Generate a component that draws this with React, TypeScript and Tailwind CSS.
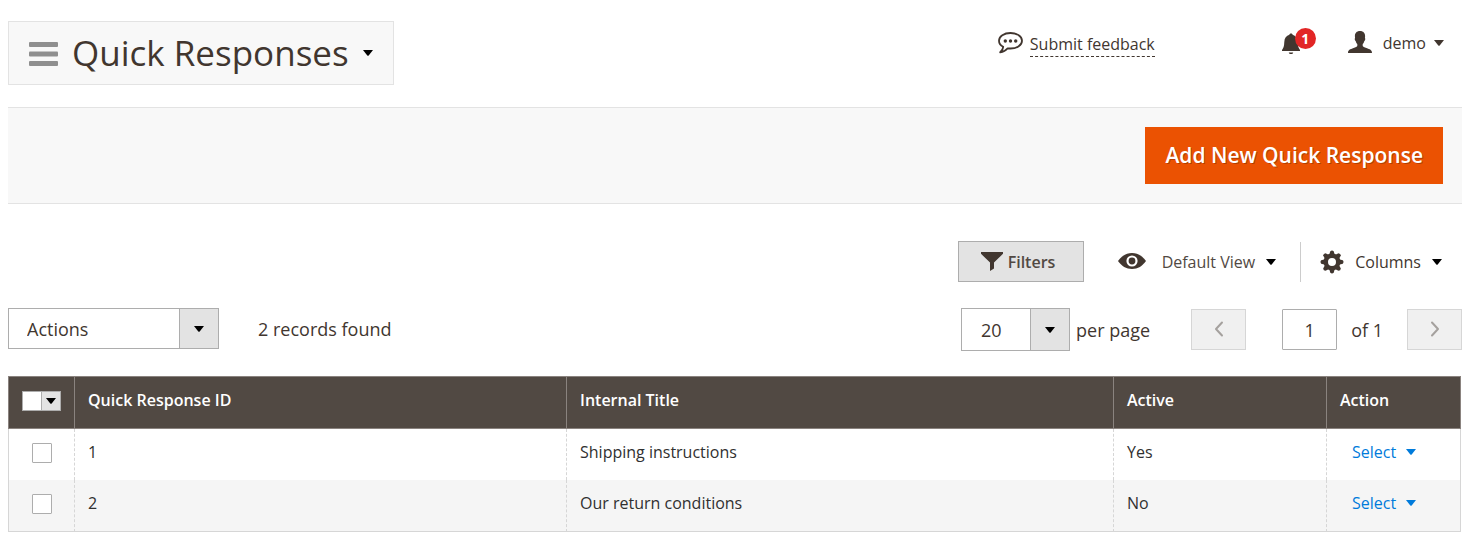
import React from "react";

type Row = { id: number; title: string; active: string };

const rows: Row[] = [
  { id: 1, title: "Shipping instructions", active: "Yes" },
  { id: 2, title: "Our return conditions", active: "No" },
];

function Caret({ className = "" }: { className?: string }) {
  return (
    <svg aria-hidden="true" viewBox="0 0 10 6" className={`h-[6px] w-[10px] shrink-0 ${className}`}>
      <path d="M0 0h10L5.7 5.4Q5 6.2 4.3 5.4Z" fill="currentColor" />
    </svg>
  );
}

function MenuIcon() {
  return (
    <svg aria-hidden="true" viewBox="0 0 29 24" className="mt-[2px] h-6 w-[29px] shrink-0" fill="#8f8f8f">
      <rect width="29" height="5" rx="1" />
      <rect y="9.5" width="29" height="5" rx="1" />
      <rect y="19" width="29" height="5" rx="1" />
    </svg>
  );
}

function SpeechIcon() {
  return (
    <svg aria-hidden="true" viewBox="0 0 26 22" className="h-[22px] w-[26px] shrink-0">
      <path
        d="M13.500 1C7 1 2 4.300 2 8.700c0 2.700 1.700 4.800 4.200 6.100C6 17 5 18.800 3.200 20.300c3.200-.3 5.600-1.700 7.500-4 .9.200 1.800.2 2.800.2 6.500 0 11.500-3.400 11.500-7.800S20 1 13.500 1Z"
        fill="none"
        stroke="#41362f"
        strokeWidth="1.800"
        strokeLinejoin="round"
      />
      <g fill="#41362f">
        <circle cx="8.300" cy="9" r="1.700" />
        <circle cx="13.500" cy="9" r="1.700" />
        <circle cx="18.700" cy="9" r="1.700" />
      </g>
    </svg>
  );
}

function BellIcon() {
  return (
    <svg aria-hidden="true" viewBox="0 -1.500 20 22" className="h-[22px] w-5" fill="#41362f">
      <path d="M10 0c-1 0-1.600.7-1.600 1.300C5.300 2.100 3.400 4.600 3.300 8.400c-.1 4.300-.9 6.200-2.300 8V17.500h18v-1.100c-1.400-1.800-2.200-3.700-2.300-8-.1-3.800-2-6.300-5.100-7.100C11.600.7 11 0 10 0Z" />
      <path d="M7.800 19h4.400c-.2 1-1 1.500-2.200 1.500S8 20 7.800 19Z" />
    </svg>
  );
}

function UserIcon() {
  return (
    <svg aria-hidden="true" viewBox="0 0 24 22" className="mb-[2px] h-[22px] w-6 shrink-0" fill="#41362f">
      <path d="M12 0C8.600 0 6.900 2.100 6.900 5.200c0 .7.100 1.200.200 1.700-.7.300-.4 2.600.6 3 .3 1.500.8 2.400 1.600 3.200v1.900c-.3.800-1.700 1.200-3.700 1.900C2 18.200 0 18.700 0 22h24c0-3.300-2-3.800-5.600-5.100-2-.7-3.400-1.100-3.700-1.900v-1.900c.8-.8 1.300-1.700 1.600-3.200 1-.4 1.300-2.700.6-3 .1-.5.200-1 .200-1.700C17.100 2.100 15.400 0 12 0Z" />
    </svg>
  );
}

function FunnelIcon() {
  return (
    <svg aria-hidden="true" viewBox="0 0 22 19" className="h-[19px] w-[22px] shrink-0" fill="#41362f">
      <path d="M0 0h22v1.800L13 10.500v6L9 19v-8.500L0 1.800Z" />
    </svg>
  );
}

function EyeIcon() {
  return (
    <svg aria-hidden="true" viewBox="0 0 28 16" className="mb-[2px] h-4 w-7 shrink-0">
      <path d="M0 8C3.500 3 8.200 0 14 0s10.500 3 14 8c-3.500 5-8.200 8-14 8S3.500 13 0 8Z" fill="#41362f" />
      <circle cx="14" cy="8" r="4.500" fill="none" stroke="#fff" strokeWidth="2.200" />
    </svg>
  );
}

function GearIcon() {
  return (
    <svg aria-hidden="true" viewBox="-12 -12 24 24" className="size-6 shrink-0">
      <g fill="#41362f">
        {[0, 45, 90, 135, 180, 225, 270, 315].map((angle) => (
          <path key={angle} d="M-2.800-7L-1.700-10.800Q0-12.200 1.700-10.800L2.800-7Z" transform={`rotate(${angle})`} />
        ))}
      </g>
      <circle r="6.200" fill="none" stroke="#41362f" strokeWidth="4.400" />
    </svg>
  );
}

function Chevron({ d }: { d: string }) {
  return (
    <svg aria-hidden="true" viewBox="0 0 10 16" className="mb-[2px] h-4 w-[10px]">
      <path d={d} fill="none" stroke="#a5a19e" strokeWidth="2" strokeLinecap="round" strokeLinejoin="round" />
    </svg>
  );
}

function SelectBox({ label, options, className }: { label: string; options: string[]; className: string }) {
  return (
    <div className="relative flex">
      <select
        aria-label={label}
        className={`appearance-none rounded-none border border-[#adadad] bg-white text-lg text-[#41362f] ${className}`}
      >
        {options.map((option) => (
          <option key={option}>{option}</option>
        ))}
      </select>
      <span className="pointer-events-none absolute inset-y-px right-px flex w-[39px] items-center justify-center border-l border-[#adadad] bg-[#e3e3e3] text-black">
        <Caret />
      </span>
    </div>
  );
}

const checkbox = "mb-1 block size-5 appearance-none rounded-[1px] border border-[#adadad] bg-white checked:bg-[#514943]";
const headCell = "border-y border-l border-[#8a837f] px-[13px] pb-[6px] text-left font-semibold last:border-r";
const bodyCell = "border-l border-dashed border-l-[#d6d6d6] px-[13px] pb-[6px] group-last:border-b group-last:[border-bottom-style:solid] group-last:border-b-[#d6d6d6]";

export default function App() {
  return (
    <div className="pt-[21px] pr-1 pb-1 pl-2 font-['Open_Sans','Noto_Sans',sans-serif] text-base text-[#41362f]">
      <header className="flex items-start justify-between">
        <button type="button" className="flex h-16 items-center gap-[14px] border border-[#e3e3e3] bg-[#f8f8f8] px-5">
          <MenuIcon />
          <h1 className="text-[35px] font-normal">Quick Responses</h1>
          <Caret className="text-black" />
        </button>
        <div className="flex h-11 items-center pr-[18px]">
          <a href="#feedback" className="flex items-center gap-[7px]">
            <SpeechIcon />
            <span className="mt-1 border-b border-dashed border-[#41362f] leading-[23px]">Submit feedback</span>
          </a>
          <button type="button" aria-label="Notifications, 1 unread" className="relative ml-[126px]">
            <BellIcon />
            <span className="absolute -top-1 left-[14px] flex size-[21px] items-center justify-center rounded-full bg-[#e22626] text-sm font-bold text-white">
              1
            </span>
          </button>
          <button type="button" className="ml-[47px] flex items-center">
            <UserIcon />
            <span className="ml-[11px]">demo</span>
            <Caret className="ml-2" />
          </button>
        </div>
      </header>

      <section className="mt-[22px] flex justify-end border-y border-[#e3e3e3] bg-[#f8f8f8] py-[19px] pr-[19px]">
        <button
          type="button"
          className="h-[57px] bg-[#eb5202] px-5 text-[21px] font-semibold text-white [text-shadow:1px_1px_0_rgba(0,0,0,0.25)]"
        >
          Add New Quick Response
        </button>
      </section>

      <div className="mt-[37px] flex items-center justify-end pr-5">
        <button
          type="button"
          className="flex h-[41px] w-[126px] items-center gap-[5px] border border-[#adadad] bg-[#e3e3e3] pl-[22px] font-semibold text-[#514943]"
        >
          <FunnelIcon />
          Filters
        </button>
        <button type="button" className="ml-[34px] flex h-10 items-center">
          <EyeIcon />
          <span className="ml-4 text-[#514943]">Default View</span>
          <Caret className="ml-[11px] text-black" />
        </button>
        <button type="button" className="ml-6 flex h-10 items-center border-l border-[#ccc] pl-[19px]">
          <GearIcon />
          <span className="ml-[11px]">Columns</span>
          <Caret className="ml-[11px] text-black" />
        </button>
      </div>

      <div className="mt-[26px] flex items-start justify-between text-lg">
        <div className="flex items-center gap-[39px]">
          <SelectBox label="Actions" options={["Actions", "Delete"]} className="h-[41px] w-[211px] pl-[18px]" />
          <p>2 records found</p>
        </div>
        <div className="flex items-center">
          <SelectBox label="Records per page" options={["20", "30", "50", "100"]} className="h-[43px] w-[109px] pl-[19px]" />
          <span className="ml-[6px]">per page</span>
          <button
            type="button"
            disabled
            aria-label="Previous page"
            className="ml-[41px] flex h-[41px] w-[55px] items-center justify-center border border-[#d6d6d6] bg-[#f0f0f0]"
          >
            <Chevron d="M8 1.500 2 8l6 6.500" />
          </button>
          <input
            aria-label="Page number"
            defaultValue="1"
            className="ml-9 h-[41px] w-[55px] rounded-[1px] border border-[#adadad] bg-white text-center"
          />
          <span className="ml-[14px]">of 1</span>
          <button
            type="button"
            disabled
            aria-label="Next page"
            className="ml-6 flex h-[41px] w-[55px] items-center justify-center border border-[#d6d6d6] bg-[#f0f0f0]"
          >
            <Chevron d="M2 1.500 8 8l-6 6.500" />
          </button>
        </div>
      </div>

      <div className="mt-[25px] pr-px">
        <table className="w-full table-fixed border-separate border-spacing-0">
          <colgroup>
            <col className="w-[66px]" />
            <col className="w-[492px]" />
            <col />
            <col className="w-[213px]" />
            <col className="w-[135px]" />
          </colgroup>
          <thead>
            <tr className="h-[53px] bg-[#514943] text-white">
              <th className="border-y border-l border-[#8a837f] pb-1">
                <div className="mx-auto flex h-5 w-[39px] border border-[#adadad] bg-[#e3e3e3]">
                  <input type="checkbox" aria-label="Select all" className="h-full w-[18px] appearance-none bg-white checked:bg-[#8a837f]" />
                  <button
                    type="button"
                    aria-label="Selection options"
                    className="flex flex-1 items-center justify-center border-l border-[#adadad] text-black"
                  >
                    <Caret />
                  </button>
                </div>
              </th>
              <th className={headCell}>Quick Response ID</th>
              <th className={headCell}>Internal Title</th>
              <th className={headCell}>Active</th>
              <th className={headCell}>Action</th>
            </tr>
          </thead>
          <tbody className="text-[#303030]">
            {rows.map((row) => (
              <tr key={row.id} className="group h-[51px] last:h-[52px] even:bg-[#f5f5f5]">
                <td className="border-l border-[#d6d6d6] pl-[23px] group-last:border-b">
                  <input type="checkbox" aria-label={`Select ${row.title}`} className={checkbox} />
                </td>
                <td className={bodyCell}>{row.id}</td>
                <td className={bodyCell}>{row.title}</td>
                <td className={bodyCell}>{row.active}</td>
                <td className={`${bodyCell} border-r border-r-[#d6d6d6] [border-right-style:solid]`}>
                  <button type="button" className="ml-3 flex items-center gap-[10px] text-[#007bdb]">
                    Select
                    <Caret />
                  </button>
                </td>
              </tr>
            ))}
          </tbody>
        </table>
      </div>
    </div>
  );
}
